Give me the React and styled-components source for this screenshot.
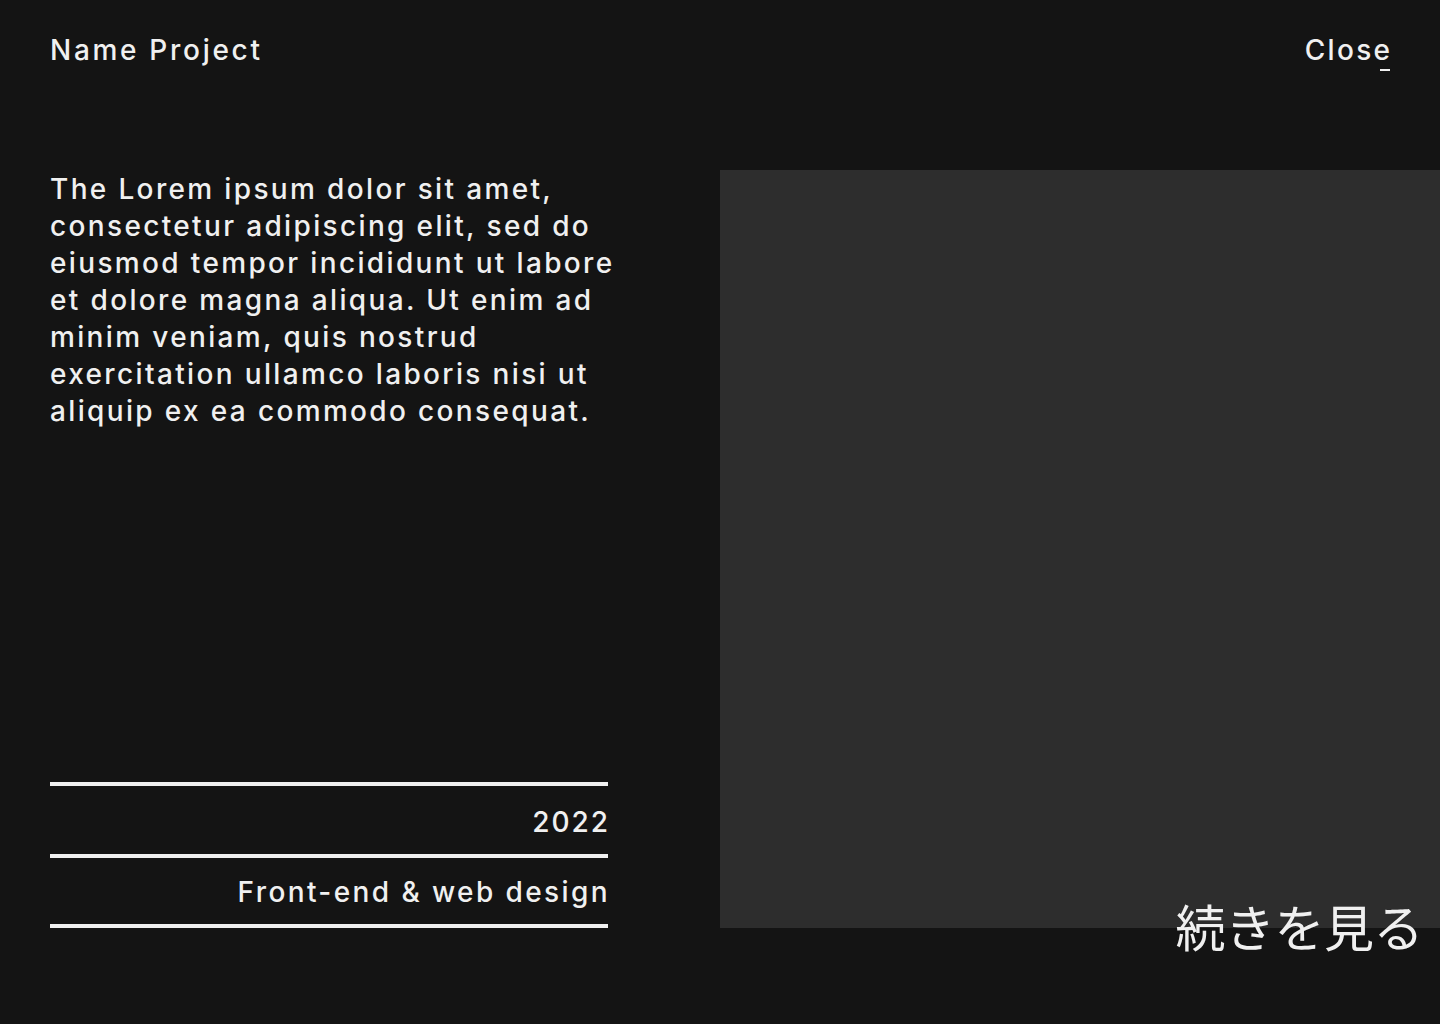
import React from 'react';
import styled, { createGlobalStyle } from 'styled-components';

const GlobalStyle = createGlobalStyle`
  * { box-sizing: border-box; }
  body {
    margin: 0;
    background: #141414;
    color: #f0f0f0;
    font-family: Inter, "Noto Sans", sans-serif;
  }
`;

const Page = styled.div`
  position: relative;
  min-height: 1024px;
  background: #141414;
  overflow: hidden;
`;

const Header = styled.header`
  display: flex;
  justify-content: space-between;
  align-items: flex-start;
  height: 170px;
  padding: 30px 50px 0 50px;
`;

const HeaderText = styled.span`
  position: relative;
  font-size: 28px;
  font-weight: 500;
  line-height: 40px;
  letter-spacing: ${(p) => (p.$end ? '2.3px' : '2.7px')};
  margin-right: ${(p) => (p.$end ? '-2.3px' : '0')};
`;

const CloseLink = styled(HeaderText)`
  cursor: pointer;

  &::after {
    content: '';
    position: absolute;
    right: 2.3px;
    bottom: -1px;
    width: 10px;
    height: 2px;
    background: #f0f0f0;
  }
`;

const Main = styled.main`
  display: grid;
  grid-template-columns: 1fr 720px;
  gap: 50px;
  padding-left: 50px;
`;

const InfoColumn = styled.div`
  display: flex;
  flex-direction: column;
  justify-content: space-between;
  height: 758px;
`;

const Description = styled.p`
  margin: 0;
  padding-top: 1px;
  width: 586px;
  font-size: 28px;
  font-weight: 500;
  line-height: 37px;
  letter-spacing: 2.35px;
`;

const MetaList = styled.ul`
  list-style: none;
  margin: 0;
  padding: 0;
  width: 558px;
  border-bottom: 4px solid #f0f0f0;
`;

const MetaItem = styled.li`
  display: flex;
  justify-content: flex-end;
  align-items: center;
  height: 72px;
  border-top: 4px solid #f0f0f0;
  padding-top: 4px;

  &:last-child {
    height: 70px;
    padding-top: 2px;
  }
`;

const MetaText = styled.span`
  margin-right: -2px;
  font-size: 28px;
  font-weight: 500;
  letter-spacing: ${(p) => (p.$wide ? '2.4px' : '2px')};
`;

const Visual = styled.div`
  position: relative;
  height: 758px;
  background: #2d2d2d;
`;

const MoreLink = styled.span`
  position: absolute;
  right: 17px;
  bottom: -22px;
  font-family: "Noto Sans CJK JP", sans-serif;
  font-size: 50px;
  font-weight: 400;
  line-height: 1;
  letter-spacing: -0.5px;
  color: #f0f0f0;
  cursor: pointer;
`;

export default function App() {
  return (
    <Page>
      <GlobalStyle />
      <Header>
        <HeaderText>Name Project</HeaderText>
        <CloseLink $end>Close</CloseLink>
      </Header>
      <Main>
        <InfoColumn>
          <Description>
            The Lorem ipsum dolor sit amet, consectetur adipiscing elit, sed do eiusmod tempor
            incididunt ut labore et dolore magna aliqua. Ut enim ad minim veniam, quis nostrud
            exercitation ullamco laboris nisi ut aliquip ex ea commodo consequat.
          </Description>
          <MetaList>
            <MetaItem>
              <MetaText>2022</MetaText>
            </MetaItem>
            <MetaItem>
              <MetaText $wide>Front-end &amp; web design</MetaText>
            </MetaItem>
          </MetaList>
        </InfoColumn>
        <Visual>
          <MoreLink>続きを見る</MoreLink>
        </Visual>
      </Main>
    </Page>
  );
}
